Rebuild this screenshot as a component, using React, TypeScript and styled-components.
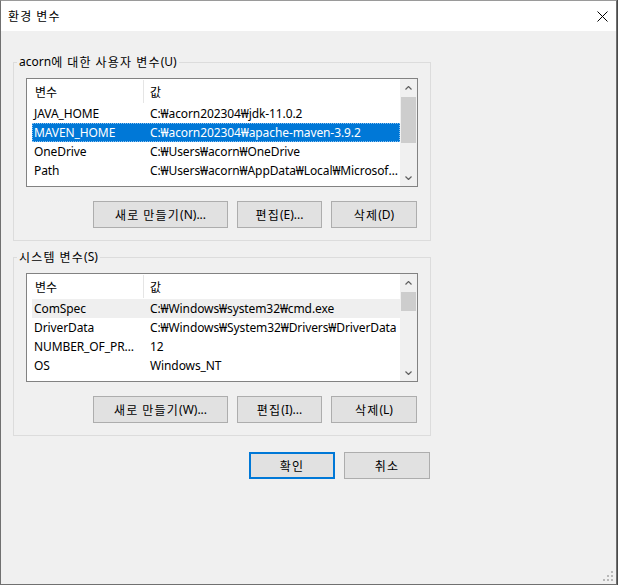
import React from "react";
import styled, { createGlobalStyle } from "styled-components";

const GlobalStyle = createGlobalStyle`
  html, body {
    margin: 0;
    padding: 0;
    background: #4a4a4a;
  }
  body {
    font-family: "Noto Sans", "Noto Sans CJK KR", sans-serif;
    font-size: 12px;
    color: #000;
  }
  * { box-sizing: border-box; }
`;

const Ko = styled.span`
  font-family: "Noto Sans CJK KR", sans-serif;
  letter-spacing: 1.2px;
  white-space: pre;
`;

const Window = styled.div`
  position: relative;
  width: 617px;
  height: 585px;
  border: 1px solid #707070;
  border-top-color: #9a9a9a;
  background: #f0f0f0;
  display: flex;
  flex-direction: column;
`;

const TitleBar = styled.div`
  height: 30px;
  background: #ffffff;
  display: flex;
  align-items: center;
  justify-content: space-between;
  padding-left: 7px;
  flex-shrink: 0;
`;

const Title = styled.span`
  font-size: 12px;
  line-height: 16px;
`;

const CloseButton = styled.div`
  width: 28px;
  height: 30px;
  display: flex;
  align-items: center;
  justify-content: center;
`;

const Body = styled.div`
  padding: 23px 0 0 12px;
  display: flex;
  flex-direction: column;
`;

const Group = styled.fieldset<{ $gapTop?: number }>`
  margin: ${(p) => p.$gapTop ?? 0}px 0 0 0;
  padding: 0;
  width: 418px;
  min-inline-size: 0;
  border: 1px solid #dcdcdc;
`;

const Legend = styled.legend`
  margin-left: 3px;
  padding: 0 2px;
  height: 16px;
  display: flex;
  align-items: center;
  font-size: 12px;
  line-height: 16px;
`;

const GroupContent = styled.div`
  padding: 8px 12px 12px 12px;
  display: flex;
  flex-direction: column;
  gap: 14px;
`;

const ListBox = styled.div`
  height: 109px;
  border: 1px solid #828282;
  background: #ffffff;
  display: flex;
  overflow: hidden;
`;

const Table = styled.div`
  flex: 1;
  min-width: 0;
  overflow: hidden;
  display: flex;
  flex-direction: column;
`;

const HeaderRow = styled.div`
  height: 25px;
  flex-shrink: 0;
  display: grid;
  grid-template-columns: 116px 1fr;
  align-items: center;
`;

const HeaderCell = styled.div<{ $divider?: boolean }>`
  height: 23px;
  display: flex;
  align-items: center;
  padding-left: ${(p) => (p.$divider ? 6 : 8)}px;
  border-left: ${(p) => (p.$divider ? "1px solid #e5e5e5" : "none")};
  font-family: "Noto Sans CJK KR", sans-serif;
`;

const Row = styled.div<{ $state?: "selected" | "hover" }>`
  flex-shrink: 0;
  margin-left: 5px;
  height: 19px;
  display: grid;
  grid-template-columns: 111px 1fr;
  align-items: center;
  background: ${(p) =>
    p.$state === "selected" ? "#0078d7" : p.$state === "hover" ? "#efefef" : "transparent"};
  color: ${(p) => (p.$state === "selected" ? "#ffffff" : "#000000")};
  outline: ${(p) => (p.$state === "selected" ? "1px dotted #8cc0ee" : "none")};
  outline-offset: -1px;
`;

const Cell = styled.div<{ $second?: boolean }>`
  padding-left: ${(p) => (p.$second ? 7 : 2)}px;
  padding-right: ${(p) => (p.$second ? 1 : 0)}px;
  white-space: nowrap;
  overflow: hidden;
  text-overflow: ellipsis;
  line-height: 19px;
  letter-spacing: -0.1px;
`;

const ScrollBar = styled.div`
  width: 17px;
  flex-shrink: 0;
  background: #f0f0f0;
  display: flex;
  flex-direction: column;
`;

const ArrowBox = styled.div`
  height: 17px;
  flex-shrink: 0;
  display: flex;
  align-items: center;
  justify-content: center;
`;

const Track = styled.div`
  flex: 1;
  display: flex;
  flex-direction: column;
`;

const Thumb = styled.div<{ $offset: number; $size: number }>`
  margin: ${(p) => p.$offset}px 1px 0 1px;
  height: ${(p) => p.$size}px;
  background: #cdcdcd;
`;

const ButtonRow = styled.div<{ $top?: number }>`
  display: flex;
  justify-content: flex-end;
  gap: 9px;
  padding-right: 1px;
  margin-top: ${(p) => p.$top ?? 0}px;
`;

const DialogButtons = styled(ButtonRow)`
  width: 418px;
`;

const Button = styled.button<{ $w: number; $default?: boolean }>`
  width: ${(p) => p.$w}px;
  height: 27px;
  padding: 0;
  margin: 0;
  background: #e1e1e1;
  border: ${(p) => (p.$default ? "2px solid #0078d7" : "1px solid #adadad")};
  font-family: "Noto Sans", "Noto Sans CJK KR", sans-serif;
  font-size: 12px;
  color: #000;
  display: flex;
  align-items: center;
  justify-content: center;
`;

const Grip = styled.svg`
  position: absolute;
  right: 2px;
  bottom: 2px;
`;

type Item = [string, string];

const Arrow = ({ up }: { up?: boolean }) => (
  <svg width="7" height="4" viewBox="0 0 7 4">
    <polyline
      points={up ? "0.5,3.5 3.5,0.5 6.5,3.5" : "0.5,0.5 3.5,3.5 6.5,0.5"}
      fill="none"
      stroke="#606060"
      strokeWidth="1.2"
    />
  </svg>
);

const VarList = ({
  items,
  selected,
  hover,
  thumbOffset,
  thumbSize,
}: {
  items: Item[];
  selected?: number;
  hover?: number;
  thumbOffset: number;
  thumbSize: number;
}) => (
  <ListBox>
    <Table>
      <HeaderRow>
        <HeaderCell>변수</HeaderCell>
        <HeaderCell $divider>값</HeaderCell>
      </HeaderRow>
      {items.map(([k, v], i) => (
        <Row key={k} $state={i === selected ? "selected" : i === hover ? "hover" : undefined}>
          <Cell>{k}</Cell>
          <Cell $second>{v}</Cell>
        </Row>
      ))}
    </Table>
    <ScrollBar>
      <ArrowBox>
        <Arrow up />
      </ArrowBox>
      <Track>
        <Thumb $offset={thumbOffset} $size={thumbSize} />
      </Track>
      <ArrowBox>
        <Arrow />
      </ArrowBox>
    </ScrollBar>
  </ListBox>
);

const userVars: Item[] = [
  ["JAVA_HOME", "C:₩acorn202304₩jdk-11.0.2"],
  ["MAVEN_HOME", "C:₩acorn202304₩apache-maven-3.9.2"],
  ["OneDrive", "C:₩Users₩acorn₩OneDrive"],
  ["Path", "C:₩Users₩acorn₩AppData₩Local₩Microsoft₩WindowsApps;"],
];

const sysVars: Item[] = [
  ["ComSpec", "C:₩Windows₩system32₩cmd.exe"],
  ["DriverData", "C:₩Windows₩System32₩Drivers₩DriverData"],
  ["NUMBER_OF_PROCESSORS", "12"],
  ["OS", "Windows_NT"],
];

export default function App() {
  return (
    <>
      <GlobalStyle />
      <Window>
        <TitleBar>
          <Title>
            <Ko>환경 변수</Ko>
          </Title>
          <CloseButton>
            <svg width="11" height="11" viewBox="0 0 11 11">
              <line x1="0.5" y1="0.5" x2="10.5" y2="10.5" stroke="#000" strokeWidth="1" />
              <line x1="10.5" y1="0.5" x2="0.5" y2="10.5" stroke="#000" strokeWidth="1" />
            </svg>
          </CloseButton>
        </TitleBar>
        <Body>
          <Group>
            <Legend>
              acorn<Ko>에 대한 사용자 변수</Ko>(U)
            </Legend>
            <GroupContent>
              <VarList items={userVars} selected={1} thumbOffset={1} thumbSize={46} />
              <ButtonRow>
                <Button $w={135}>
                  <Ko>새로 만들기</Ko>(N)...
                </Button>
                <Button $w={85}>
                  <Ko>편집</Ko>(E)...
                </Button>
                <Button $w={86}>
                  <Ko>삭제</Ko>(D)
                </Button>
              </ButtonRow>
            </GroupContent>
          </Group>
          <Group $gapTop={8}>
            <Legend>
              <Ko>시스템 변수</Ko>(S)
            </Legend>
            <GroupContent>
              <VarList items={sysVars} hover={0} thumbOffset={1} thumbSize={19} />
              <ButtonRow>
                <Button $w={135}>
                  <Ko>새로 만들기</Ko>(W)...
                </Button>
                <Button $w={85}>
                  <Ko>편집</Ko>(I)...
                </Button>
                <Button $w={86}>
                  <Ko>삭제</Ko>(L)
                </Button>
              </ButtonRow>
            </GroupContent>
          </Group>
          <DialogButtons $top={16}>
            <Button $w={86} $default>
              <Ko>확인</Ko>
            </Button>
            <Button $w={86}>
              <Ko>취소</Ko>
            </Button>
          </DialogButtons>
        </Body>
        <Grip width="11" height="11" viewBox="0 0 11 11">
          <rect x="8" y="0" width="2" height="2" fill="#b8b8b8" />
          <rect x="4" y="4" width="2" height="2" fill="#b8b8b8" />
          <rect x="8" y="4" width="2" height="2" fill="#b8b8b8" />
          <rect x="0" y="8" width="2" height="2" fill="#b8b8b8" />
          <rect x="4" y="8" width="2" height="2" fill="#b8b8b8" />
          <rect x="8" y="8" width="2" height="2" fill="#b8b8b8" />
        </Grip>
      </Window>
    </>
  );
}
